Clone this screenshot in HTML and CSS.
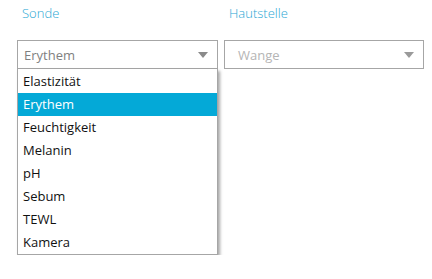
FILE: index.html
```html
<!DOCTYPE html>
<html lang="de">
<head>
<meta charset="utf-8">
<title>Sonde</title>
<link rel="stylesheet" href="styles.css">
</head>
<body>
<div class="form">
  <div class="field">
    <div class="label">Sonde</div>
    <div class="select">
      <span class="value">Erythem</span>
      <span class="arrow"></span>
    </div>
    <div class="list">
      <div class="item">Elastizität</div>
      <div class="item active">Erythem</div>
      <div class="item">Feuchtigkeit</div>
      <div class="item">Melanin</div>
      <div class="item">pH</div>
      <div class="item">Sebum</div>
      <div class="item">TEWL</div>
      <div class="item">Kamera</div>
    </div>
  </div>
  <div class="field field-2">
    <div class="label">Hautstelle</div>
    <div class="select disabled">
      <span class="value">Wange</span>
      <span class="arrow"></span>
    </div>
  </div>
</div>
</body>
</html>
```
FILE: styles.css
```css
html, body {
  margin: 0;
  padding: 0;
  background: #ffffff;
}
body {
  font-family: "Open Sans", "Noto Sans", sans-serif;
  font-size: 13px;
  color: #1a1a1a;
}
.form {
  display: flex;
  align-items: flex-start;
  gap: 6px;
  padding: 5px 0 0 17px;
}
.field {
  width: 201px;
}
.field-2 {
  width: 200px;
}
.label {
  font-weight: 300;
  color: #2aa7d4;
  line-height: 16px;
  height: 16px;
  padding-left: 5px;
  margin-bottom: 19px;
}
.select {
  box-sizing: border-box;
  height: 29px;
  border: 1px solid #a6a6a6;
  display: flex;
  align-items: center;
  justify-content: space-between;
  padding: 0 9px 0 6px;
  background: #fff;
}
.value {
  color: #7f7f7f;
  font-size: 13px;
  line-height: 16px;
}
.disabled .value {
  color: #b5b5b5;
  padding-left: 7px;
}
.arrow {
  width: 0;
  height: 0;
  border-left: 5px solid transparent;
  border-right: 5px solid transparent;
  border-top: 6px solid #8a8a8a;
  margin-top: 1px;
}
.disabled .arrow {
  border-top-color: #9a9a9a;
}
.list {
  display: flex;
  flex-direction: column;
  width: 201px;
  box-sizing: border-box;
  background: #fff;
  border: 1px solid #a6a6a6;
  border-top: none;
  padding-top: 1px;
  box-shadow: 2px 2px 3px rgba(0, 0, 0, 0.35);
}
.item {
  height: 23px;
  line-height: 23px;
  padding-left: 5px;
  color: #111;
}
.item.active {
  background: #04a9d7;
  color: #ffffff;
}
```
